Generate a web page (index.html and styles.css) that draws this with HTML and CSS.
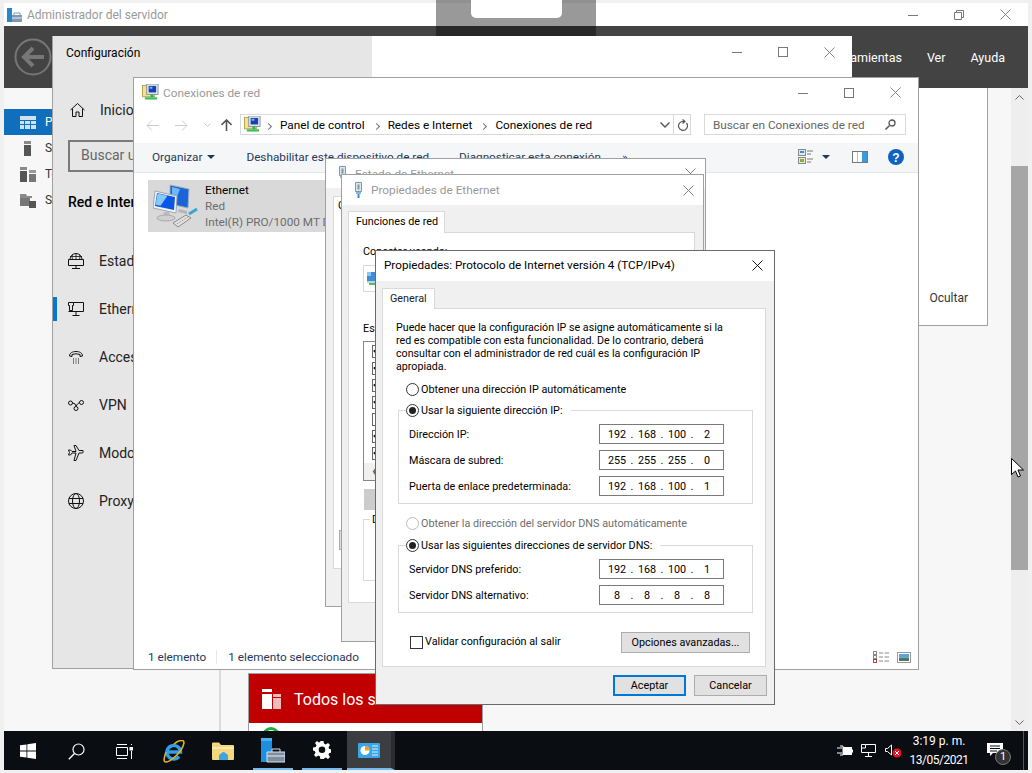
FILE: index.html
```html
<!DOCTYPE html>
<html lang="es">
<head>
    <meta charset="UTF-8">
    <title>Administrador del servidor</title>
    <link rel="stylesheet" href="styles.css">
</head>
<body>
<svg class="defs" width="0" height="0">
    <symbol id="i-close" viewBox="0 0 12 12"><path d="M.5.5l11 11M11.500.5l-11 11" fill="none" stroke="currentColor"/></symbol>
    <symbol id="i-max" viewBox="0 0 10 10"><rect x=".5" y=".5" width="9" height="9" fill="none" stroke="currentColor"/></symbol>
    <symbol id="i-min" viewBox="0 0 10 10"><path d="M0 5.500h10" stroke="currentColor"/></symbol>
    <symbol id="i-net" viewBox="0 0 18 18">
        <rect x=".5" y="1.500" width="13" height="12" fill="#f6e08a" stroke="#b8a24a"/>
        <rect x="5" y="0" width="12" height="11" fill="#e8eef5" stroke="#7f8fa0"/>
        <rect x="7" y="2" width="8" height="7" fill="#1b3fb0"/>
        <rect x="8" y="3" width="3" height="2" fill="#7fb4f0"/>
        <path d="M9 11h3v3H9z" fill="#2fae4e"/>
        <path d="M3 14h13v2.500H3z" fill="#3fc060"/>
    </symbol>
    <symbol id="i-plug" viewBox="0 0 9 16">
        <path d="M1.500.5h6v9h-6z" fill="#dbe6ee" stroke="#7f96a8"/>
        <path d="M3.500 2.500h2v5h-2z" fill="#7f96a8"/>
        <path d="M2 10h5v2H2z" fill="#8fb4d0"/>
        <path d="M3.500 12h2v4h-2z" fill="#2f8fd0"/>
    </symbol>
</svg>

<div class="screen">
    <div class="server">
        <div class="server-title">
            <svg class="server-logo" width="15" height="14" viewBox="0 0 15 14">
                <rect x="0" y="0" width="5" height="3" fill="#1f8ad0"/>
                <rect x="0" y="3" width="5" height="11" fill="#2a86c8"/>
                <path d="M5 7h10v7H5z" fill="#7d9ab0"/>
                <path d="M5 10h10" stroke="#e4edf3"/>
                <path d="M7 7V5h6v2" fill="none" stroke="#7d9ab0"/>
            </svg>
            <span class="server-name">Administrador del servidor</span>
            <div class="caption caption-server">
                <span class="cap"><svg width="10" height="10"><use href="#i-min"/></svg></span>
                <span class="cap"><svg width="10" height="10" viewBox="0 0 10 10"><path d="M.5 2.500h7v7h-7zM2.500 2.500v-2h7v7h-2" fill="none" stroke="currentColor"/></svg></span>
                <span class="cap"><svg width="11" height="11"><use href="#i-close"/></svg></span>
            </div>
        </div>
        <div class="server-menu">
            <svg class="back" width="38" height="38" viewBox="0 0 38 38">
                <circle cx="19" cy="19" r="17.500" fill="none" stroke="#777" stroke-width="2"/>
                <path d="M30 19H11M19 10l-9 9 9 9" fill="none" stroke="#777" stroke-width="4"/>
            </svg>
            <span class="menu-link">Herramientas</span>
            <span class="menu-link">Ver</span>
            <span class="menu-link">Ayuda</span>
        </div>
        <div class="server-main">
            <div class="side">
                <div class="side-item side-on">
                    <svg width="16" height="13" viewBox="0 0 16 13"><path d="M0 0h16v4H0zM0 5h4v3H0zM5 5h5v3H5zM11 5h5v3h-5zM0 9h4v4H0zM5 9h5v4H5zM11 9h5v4h-5z" fill="#cfe2f3"/></svg>
                    <span>Panel</span>
                </div>
                <div class="side-item">
                    <svg width="16" height="15" viewBox="0 0 16 15"><path d="M4 0h7v3H4z" fill="#8a8a8a"/><path d="M4 4h7v11H4z" fill="#555"/></svg>
                    <span>Servidor</span>
                </div>
                <div class="side-item">
                    <svg width="16" height="15" viewBox="0 0 16 15"><path d="M0 0h7v3H0z" fill="#8a8a8a"/><path d="M0 4h7v11H0z" fill="#555"/><path d="M9 3h7v3H9z" fill="#999"/><path d="M9 7h7v8H9z" fill="#777"/></svg>
                    <span>Todos</span>
                </div>
                <div class="side-item">
                    <svg width="16" height="15" viewBox="0 0 16 15"><path d="M0 1h6l1 2h5v2H0z" fill="#8a8a8a"/><path d="M0 5h10v8H0z" fill="#777"/><path d="M9 8h7v7H9z" fill="#555"/></svg>
                    <span>Servicios</span>
                </div>
            </div>
            <div class="content">
                <div class="welcome"><span class="hide-link">Ocultar</span></div>
                <div class="tile">
                    <div class="tile-head">
                        <svg width="19" height="20" viewBox="0 0 19 20"><path d="M0 0h10v3H0zM0 5h10v15H0z" fill="#fff"/><path d="M11 5h8v3h-8zM11 9h8v11h-8z" fill="#f0bcbc"/></svg>
                        <span class="tile-name">Todos los servidores</span>
                        <span class="tile-count">1</span>
                    </div>
                    <svg class="tile-ok" width="18" height="18" viewBox="0 0 18 18"><circle cx="9" cy="9" r="7.500" fill="none" stroke="#1fae3a" stroke-width="3"/></svg>
                </div>
            </div>
            <div class="scrollbar">
                <svg class="scroll-up" width="9" height="5" viewBox="0 0 9 5"><path d="M.5 4.500l4-4 4 4" fill="none" stroke="#666"/></svg>
                <div class="scroll-thumb"></div>
                <svg class="scroll-down" width="9" height="5" viewBox="0 0 9 5"><path d="M.5.5l4 4 4-4" fill="none" stroke="#666"/></svg>
            </div>
        </div>
    </div>

    <div class="taskbar">
        <span class="task"><svg width="16" height="16" viewBox="0 0 16 16"><path d="M0 2.300l6.500-.9v6.200H0zM7.300 1.300L16 0v7.600H7.300zM0 8.400h6.500v6.200L0 13.700zM7.300 8.400H16V16l-8.700-1.300z" fill="#fff"/></svg></span>
        <span class="task"><svg width="17" height="17" viewBox="0 0 17 17"><circle cx="10.500" cy="6.500" r="5.500" fill="none" stroke="#fff" stroke-width="1.200"/><path d="M6.500 10.500L.8 16.300" stroke="#fff" stroke-width="1.400"/></svg></span>
        <span class="task"><svg width="17" height="15" viewBox="0 0 17 15"><path d="M1 .5h10M1 14.500h10M.5 3.500h11v8H.5zM15.500 7v8M15.500 0v1" fill="none" stroke="#fff"/><rect x="13.500" y="3" width="3.500" height="3.500" fill="#fff"/></svg></span>
        <span class="task task-ie"><svg width="22" height="23" viewBox="0 0 22 23">
            <path d="M4 12h13.500a6.800 6.800 0 1 0-1.500 4.500" fill="none" stroke="#2f9fe8" stroke-width="3.400"/>
            <path d="M3 12C1 18 0 22 3 22c3.500 0 11-6 15-12 3-5 4-9 1.500-9.500C17.500.2 14 1.500 11 4" fill="none" stroke="#e8b020" stroke-width="1.600"/>
        </svg></span>
        <span class="task task-folder"><svg width="22" height="19" viewBox="0 0 22 19">
            <path d="M0 1.500q0-1 1-1h6l2 2.500h12q1 0 1 1V17q0 1-1 1H1q-1 0-1-1z" fill="#f5d77e"/>
            <path d="M0 5h22v2H0z" fill="#fbe9ad"/>
            <path d="M7 13l4-3h1l4 3v5H7z" fill="#3ba5e5"/>
        </svg></span>
        <span class="task task-on task-mgr"><svg width="24" height="25" viewBox="0 0 24 25">
            <path d="M0 0h11v3H0z" fill="#4ab0f0"/><path d="M0 3h11v21H0z" fill="#1e8ee0"/>
            <path d="M6 14h18v10H6z" fill="#7d8f9f" stroke="#d8e2ea"/><path d="M6 18h18" stroke="#e8eef2"/><path d="M11 14v-3h8v3" fill="none" stroke="#d8e2ea"/>
        </svg></span>
        <span class="task task-on task-gear"><svg width="18" height="18" viewBox="0 0 18 18">
            <path d="M7.500 0h3l.5 2.600 1.800.8L15 1.900 17 4l-1.500 2.200.8 1.800 2.700.5v3l-2.700.5-.8 1.800 1.500 2.200-2 2.100-2.200-1.500-1.800.8-.5 2.600h-3L7 15.400l-1.800-.8L3 16.100 1 14l1.500-2.200-.8-1.800L-.1 9.500v-3L2.700 6l.8-1.800L2 2 4 0l2 1.500L7 1z" fill="#fff"/>
            <circle cx="9" cy="8.800" r="3.300" fill="#0a0d12"/>
        </svg></span>
        <span class="task task-active"><svg width="22" height="15" viewBox="0 0 22 15">
            <rect width="22" height="15" rx="1" fill="#3aa6e8"/><circle cx="7" cy="7.500" r="4.500" fill="#fff"/><path d="M7 7.500V3a4.500 4.500 0 0 1 4.500 4.500z" fill="#e8a020"/><path d="M14 3h6M14 6h6M14 9h6M14 12h6" stroke="#d8f0ff"/>
        </svg></span>
        <div class="tray">
            <svg width="16" height="11" viewBox="0 0 16 11"><path d="M0 3h5M0 8h5M3 1h3v9H3" fill="none" stroke="#fff"/><rect x="6.500" y="2.500" width="8" height="7" fill="#fff" stroke="#fff"/><path d="M15 4.500h1v3h-1z" fill="#fff"/></svg>
            <svg width="16" height="13" viewBox="0 0 16 13"><path d="M.5 1.500v7h14v-8h-10M7.500 8.500v4M4 12.500h7" fill="none" stroke="#fff"/><path d="M.5.5h4v3.500h-4z" fill="#0a0d12" stroke="#fff"/></svg>
            <svg width="17" height="14" viewBox="0 0 17 14"><path d="M.5 4.500h2l4-3.500v10l-4-3.500h-2z" fill="none" stroke="#fff"/><circle cx="12" cy="9" r="4.500" fill="#e81123"/><path d="M10 7l4 4M14 7l-4 4" stroke="#fff"/></svg>
            <div class="clock"><span>3:19 p. m.</span><span class="clock-date">13/05/2021</span></div>
            <div class="notif">
                <svg width="16" height="14" viewBox="0 0 16 14"><path d="M0 0h16v10H6l-3 3v-3H0z" fill="#fff"/><path d="M3 3h10M3 5.500h10M3 8h7" stroke="#0a0d12"/></svg>
                <span class="notif-badge">1</span>
            </div>
            <span class="desk-line"></span>
        </div>
    </div>

    <div class="snap"><div class="snap-thumb"></div></div>

    <div class="win config">
        <div class="config-side">
            <div class="config-title">Configuración</div>
            <div class="config-home">
                <svg width="15" height="14" viewBox="0 0 15 14"><path d="M.5 7l7-6.500 7 6.500M2.500 5.500v8h3.500V9h3v4.500h3.500v-8" fill="none" stroke="#111"/></svg>
                <span>Inicio</span>
            </div>
            <div class="config-search">Buscar un valor de configuración</div>
            <div class="config-head">Red e Internet</div>
            <div class="config-list">
                <div class="config-item">
                    <svg width="16" height="16" viewBox="0 0 16 16"><circle cx="8" cy="6.500" r="6" fill="none" stroke="#111"/><path d="M2 3.500h12M8 .5v6M4.500 1.500q-1 2 0 5M11.500 1.500q1 2 0 5" fill="none" stroke="#111" stroke-width=".8"/><path d="M.5 6.500h15v6H.5zM8 12.500v3M4 15.500h8" fill="#e6e6e6" stroke="#111"/></svg>
                    <span>Estado de la red</span>
                </div>
                <div class="config-item item-on">
                    <svg width="16" height="14" viewBox="0 0 16 14"><path d="M4 .5h11.500v9H.5M8 9.500v4M4.500 13.500h7" fill="none" stroke="#111"/><path d="M.5.5h5v3h-1v5h-3v-5h-1z" fill="#e6e6e6" stroke="#111"/></svg>
                    <span>Ethernet</span>
                </div>
                <div class="config-item">
                    <svg width="14" height="13" viewBox="0 0 14 13"><path d="M.5 5c0-3 3-4.500 6.500-4.500S13.500 2 13.500 5l-2.500.5V3.500q-4-1.500-8 0v2z" fill="none" stroke="#111"/><path d="M4 8h1M6.500 8h1M9 8h1M4 10h1M6.500 10h1M9 10h1M4 12h1M6.500 12h1M9 12h1" stroke="#111"/></svg>
                    <span>Acceso telefónico</span>
                </div>
                <div class="config-item">
                    <svg width="16" height="11" viewBox="0 0 16 11"><circle cx="2.500" cy="3" r="2" fill="none" stroke="#111"/><circle cx="13.500" cy="2.500" r="2" fill="none" stroke="#111"/><circle cx="8" cy="8.500" r="2" fill="none" stroke="#111"/><path d="M4.500 3q3 0 3.500 3M8 6q2-3 3.500-3.500" fill="none" stroke="#111"/></svg>
                    <span>VPN</span>
                </div>
                <div class="config-item">
                    <svg width="16" height="16" viewBox="0 0 16 16"><path d="M6 .5h2l3 5h4q.5 2-.5 2.500H11l-3 7.500H6L8 8H4L2.500 10H.5l1-2.500-1-2.500h2L4 6.500h4z" fill="none" stroke="#111"/></svg>
                    <span>Modo avión</span>
                </div>
                <div class="config-item">
                    <svg width="16" height="16" viewBox="0 0 16 16"><circle cx="8" cy="8" r="7.500" fill="none" stroke="#111"/><ellipse cx="8" cy="8" rx="3.500" ry="7.500" fill="none" stroke="#111"/><path d="M1 5.500h14M1 10.500h14" stroke="#111"/></svg>
                    <span>Proxy</span>
                </div>
            </div>
        </div>
        <div class="config-main">
            <div class="caption">
                <span class="cap"><svg width="10" height="10"><use href="#i-min"/></svg></span>
                <span class="cap"><svg width="10" height="10"><use href="#i-max"/></svg></span>
                <span class="cap"><svg width="11" height="11"><use href="#i-close"/></svg></span>
            </div>
        </div>
    </div>

    <div class="win conns">
        <div class="win-title conns-title">
            <svg width="17" height="17"><use href="#i-net"/></svg>
            <span class="title-off">Conexiones de red</span>
            <div class="caption">
                <span class="cap"><svg width="10" height="10"><use href="#i-min"/></svg></span>
                <span class="cap"><svg width="10" height="10"><use href="#i-max"/></svg></span>
                <span class="cap"><svg width="11" height="11"><use href="#i-close"/></svg></span>
            </div>
        </div>
        <div class="nav">
            <svg class="nav-btn" width="13" height="11" viewBox="0 0 13 11"><path d="M13 5.500H1M6 .5l-5 5 5 5" fill="none" stroke="#ccc"/></svg>
            <svg class="nav-btn" width="13" height="11" viewBox="0 0 13 11"><path d="M0 5.500h12M7 .5l5 5-5 5" fill="none" stroke="#ccc"/></svg>
            <svg class="nav-btn nav-drop" width="7" height="4" viewBox="0 0 7 4"><path d="M.5.500l3 3 3-3" fill="none" stroke="#ccc"/></svg>
            <svg class="nav-btn nav-up" width="11" height="12" viewBox="0 0 11 12"><path d="M5.500 12V1.500M.5 6l5-5 5 5" fill="none" stroke="#555" stroke-width="1.600"/></svg>
            <div class="address">
                <svg width="17" height="17"><use href="#i-net"/></svg>
                <span class="crumb">Panel de control</span>
                <span class="crumb">Redes e Internet</span>
                <span class="crumb">Conexiones de red</span>
                <svg class="addr-drop" width="10" height="6" viewBox="0 0 10 6"><path d="M.5.5l4.500 4.500L9.500.5" fill="none" stroke="#555" stroke-width="1.400"/></svg>
                <span class="addr-refresh"><svg width="11" height="12" viewBox="0 0 11 12"><path d="M9.500 4a4.500 4.500 0 1 1-4.500-1.500H8M5.500.5l2.500 2-2.500 2" fill="none" stroke="#555" stroke-width="1.200"/></svg></span>
            </div>
            <div class="find">
                <span>Buscar en Conexiones de red</span>
                <svg width="11" height="11" viewBox="0 0 11 11"><circle cx="7" cy="4" r="3" fill="none" stroke="#555" stroke-width="1.300"/><path d="M4.500 6.500L.5 10.500" stroke="#555" stroke-width="1.500"/></svg>
            </div>
        </div>
        <div class="toolbar">
            <span class="tool tool-org">Organizar <i class="drop"></i></span>
            <span class="tool tool-dis">Deshabilitar este dispositivo de red</span>
            <span class="tool tool-diag">Diagnosticar esta conexión</span>
            <span class="tool tool-more">»</span>
            <div class="tool-icons">
                <svg width="15" height="15" viewBox="0 0 15 15"><rect x=".5" y=".5" width="7" height="6" fill="#dfe8f0" stroke="#888"/><rect x="2" y="2" width="4" height="2" fill="#3b8ed0"/><rect x=".5" y="8.500" width="7" height="6" fill="#f0e6c8" stroke="#888"/><rect x="2" y="10" width="4" height="3" fill="#7fb050"/><path d="M9 2h6M9 5h4M9 10h6M9 13h4" stroke="#777"/></svg>
                <i class="drop drop-view"></i>
                <svg class="pane-icon" width="16" height="12" viewBox="0 0 16 12"><rect x=".5" y=".5" width="15" height="11" fill="#fff" stroke="#777"/><rect x="10" y="1" width="5" height="10" fill="#3a9ae0"/><path d="M5.500 1v10" stroke="#bbb"/></svg>
                <svg class="help-icon" width="16" height="16" viewBox="0 0 16 16"><circle cx="8" cy="8" r="8" fill="#0f62c0"/><text x="8" y="12.500" font-size="12" font-weight="700" text-anchor="middle" fill="#fff" font-family="Liberation Sans, sans-serif">?</text></svg>
            </div>
        </div>
        <div class="conn-list">
            <div class="conn">
                <svg width="46" height="46" viewBox="0 0 46 46">
                    <path d="M17 2l19 4-1 19-18-4z" fill="#1a63d8" stroke="#9fb0bf"/>
                    <path d="M19 4l8 2-5 13-3-1z" fill="#6fb8f5"/>
                    <path d="M26 26l8 2v3l-9-2z" fill="#b5b5b5"/>
                    <path d="M2 8l22 5-1 17-23-5z" fill="#f2f4f6" stroke="#9fa8b0"/>
                    <path d="M4 10l18 4-1 13-19-4z" fill="#0b56e6"/>
                    <path d="M4.500 10.500l10 2.200-7 10-5-1z" fill="#86c8f8"/>
                    <path d="M11 29h5l1 4h-7z" fill="#bbb"/>
                    <ellipse cx="13" cy="35" rx="9" ry="3" fill="#d0d0d0" stroke="#aaa"/>
                    <path d="M20 40l13-8 5 3-13 9z" fill="#e2e2e2" stroke="#8a8a8a"/>
                    <path d="M24 41l11-7" stroke="#8a8a8a" stroke-dasharray="1 1"/>
                    <path d="M36 31l8-5" stroke="#36a8d8" stroke-width="3"/>
                </svg>
                <div class="conn-text">
                    <span class="conn-name">Ethernet</span>
                    <span>Red</span>
                    <span>Intel(R) PRO/1000 MT Desktop Adapter</span>
                </div>
            </div>
        </div>
        <div class="statusbar">
            <span class="st-count">1 elemento</span>
            <span class="st-sel">1 elemento seleccionado</span>
            <div class="st-icons">
                <svg width="16" height="12" viewBox="0 0 16 12"><rect x=".5" y=".5" width="3" height="3" fill="none" stroke="#888"/><rect x=".5" y="4.500" width="3" height="3" fill="none" stroke="#888"/><rect x=".5" y="8.500" width="3" height="3" fill="none" stroke="#a44"/><path d="M6 2h4M11.500 2H16M6 6h4M11.500 6H16M6 10h4M11.500 10H16" stroke="#888"/></svg>
                <svg width="14" height="11" viewBox="0 0 14 11"><rect x=".5" y=".5" width="13" height="10" fill="#fff" stroke="#999"/><rect x="2" y="2" width="10" height="3.500" fill="#5ba6e0"/><rect x="2" y="5.500" width="10" height="3.500" fill="#4d7a6a"/></svg>
            </div>
        </div>
    </div>

    <div class="win estado">
        <div class="win-title dlg-title">
            <svg width="9" height="16"><use href="#i-plug"/></svg>
            <span class="title-off">Estado de Ethernet</span>
            <span class="dlg-x"><svg width="11" height="11"><use href="#i-close"/></svg></span>
        </div>
        <div class="estado-body">
            <div class="estado-panel">
                <span class="estado-frag">Conexión</span>
                <span class="estado-btn"></span>
            </div>
        </div>
    </div>

    <div class="win eth">
        <div class="win-title dlg-title eth-title">
            <svg width="9" height="16"><use href="#i-plug"/></svg>
            <span class="title-off">Propiedades de Ethernet</span>
            <span class="dlg-x"><svg width="11" height="11"><use href="#i-close"/></svg></span>
        </div>
        <div class="dlg-body eth-body">
            <div class="tab eth-tab">Funciones de red</div>
            <div class="panel eth-panel">
                <div class="eth-label">Conectar usando:</div>
                <div class="eth-adapter">
                    <svg width="9" height="14" viewBox="0 0 9 14"><path d="M0 1h9v9H0z" fill="#3b8fd8"/><path d="M0 1h4v4H0z" fill="#8cc6f2"/><path d="M0 10h9v2H0z" fill="#c8d0d6"/><path d="M2 12h7v2H2z" fill="#4cc060"/></svg>
                </div>
                <div class="eth-label eth-label2">Esta conexión usa los siguientes elementos:</div>
                <div class="eth-items">
                    <span class="eth-check on"></span>
                    <span class="eth-check on"></span>
                    <span class="eth-check on"></span>
                    <span class="eth-check on"></span>
                    <span class="eth-check"></span>
                    <span class="eth-check on"></span>
                    <span class="eth-check on"></span>
                    <span class="eth-hscroll">‹</span>
                </div>
                <div class="eth-btn"></div>
                <fieldset class="eth-desc"><legend>Descripción</legend></fieldset>
            </div>
        </div>
    </div>

    <div class="win ipv4">
        <div class="ipv4-title">
            <span>Propiedades: Protocolo de Internet versión 4 (TCP/IPv4)</span>
            <svg width="11" height="11"><use href="#i-close"/></svg>
        </div>
        <div class="dlg-body ipv4-body">
            <div class="tab ipv4-tab">General</div>
            <div class="panel ipv4-panel">
                <p class="intro">Puede hacer que la configuración IP se asigne automáticamente si la<br>red es compatible con esta funcionalidad. De lo contrario, deberá<br>consultar con el administrador de red cuál es la configuración IP<br>apropiada.</p>
                <div class="radio-row"><span class="radio"></span>Obtener una dirección IP automáticamente</div>
                <fieldset class="group">
                    <legend class="radio-row"><span class="radio on"></span>Usar la siguiente dirección IP:</legend>
                    <div class="ip-row"><span>Dirección IP:</span><div class="ip"><b>192</b><i>.</i><b>168</b><i>.</i><b>100</b><i>.</i><b>2</b></div></div>
                    <div class="ip-row"><span>Máscara de subred:</span><div class="ip"><b>255</b><i>.</i><b>255</b><i>.</i><b>255</b><i>.</i><b>0</b></div></div>
                    <div class="ip-row"><span>Puerta de enlace predeterminada:</span><div class="ip"><b>192</b><i>.</i><b>168</b><i>.</i><b>100</b><i>.</i><b>1</b></div></div>
                </fieldset>
                <div class="radio-row radio-off"><span class="radio"></span>Obtener la dirección del servidor DNS automáticamente</div>
                <fieldset class="group group-dns">
                    <legend class="radio-row"><span class="radio on"></span>Usar las siguientes direcciones de servidor DNS:</legend>
                    <div class="ip-row"><span>Servidor DNS preferido:</span><div class="ip"><b>192</b><i>.</i><b>168</b><i>.</i><b>100</b><i>.</i><b>1</b></div></div>
                    <div class="ip-row"><span>Servidor DNS alternativo:</span><div class="ip"><b>8</b><i>.</i><b>8</b><i>.</i><b>8</b><i>.</i><b>8</b></div></div>
                </fieldset>
                <div class="validate">
                    <span class="check"></span>
                    <span class="validate-text">Validar configuración al salir</span>
                    <span class="btn btn-adv">Opciones avanzadas...</span>
                </div>
            </div>
            <div class="dlg-foot">
                <span class="btn btn-ok">Aceptar</span>
                <span class="btn">Cancelar</span>
            </div>
        </div>
    </div>

    <svg class="cursor" width="13" height="20" viewBox="0 0 13 20"><path d="M.5.500v16l4-3.500 2.500 6 2.500-1-2.500-6h5.500z" fill="#fff" stroke="#000"/></svg>
</div>
</body>
</html>
```

FILE: styles.css
```css
* {
    box-sizing: border-box;
}

html, body {
    margin: 0;
    height: 100%;
}

body {
    font-family: Roboto, "Noto Sans", sans-serif;
    font-size: 11.75px;
    color: #000;
    overflow: hidden;
}

.defs {
    position: absolute;
}

svg {
    display: block;
    flex: none;
}

.screen {
    position: relative;
    width: 1032px;
    height: 773px;
    padding: 3px 4px;
    background: #f0f0f0;
    display: flex;
    flex-direction: column;
    overflow: hidden;
}

/* administrador del servidor */
.server {
    height: 728px;
    display: flex;
    flex-direction: column;
}

.server-title {
    height: 23px;
    background: #fff;
    display: flex;
    align-items: center;
    padding-left: 3px;
    flex: none;
}

.server-name {
    margin-left: 5px;
    font-size: 12px;
    color: #999;
}

.caption {
    display: flex;
    justify-content: flex-end;
    margin-left: auto;
    color: #777;
}

.cap {
    width: 46px;
    height: 32px;
    display: flex;
    align-items: center;
    justify-content: center;
}

.caption-server .cap {
    height: 23px;
}

.server-menu {
    height: 62px;
    background: #434343;
    flex: none;
    display: flex;
    align-items: center;
    padding-left: 10px;
    color: #fff;
    font-size: 12.5px;
}

.menu-link:nth-child(2) {
    margin-left: auto;
}

.menu-link {
    margin-right: 25px;
}

.menu-link:last-child {
    margin-right: 23px;
}

.server-main {
    flex: 1;
    display: flex;
    background: #f7f7f7;
    min-height: 0;
}

.side {
    width: 217px;
    flex: none;
    border-right: 2px solid #dcdcdc;
    padding-top: 21px;
    font-size: 12px;
}

.side-item {
    height: 26px;
    display: flex;
    align-items: center;
    gap: 9px;
    padding-left: 16px;
    color: #333;
}

.side-on {
    background: #0f6fbc;
    color: #fff;
}

.content {
    flex: 1;
    padding-right: 23px;
    overflow: hidden;
}

.welcome {
    height: 238px;
    background: #fff;
    border-right: 1px solid #a0a0a0;
    border-bottom: 1px solid #a0a0a0;
    display: flex;
    align-items: flex-end;
    justify-content: flex-end;
    padding: 0 19px 20px 0;
    font-size: 12px;
    color: #333;
}

.tile {
    width: 235px;
    margin: 347px 0 0 27px;
    height: 80px;
    background: #fff;
    border: 1px solid #a0a0a0;
}

.tile-head {
    height: 49px;
    background: #c00000;
    color: #fff;
    display: flex;
    align-items: center;
    padding-left: 13px;
}

.tile-name {
    margin-left: 13px;
    padding-top: 2px;
    font-size: 16px;
}

.tile-count {
    margin-left: auto;
    margin-right: 15px;
    font-size: 15px;
}

.tile-ok {
    margin: 4px 0 0 13px;
}

.scrollbar {
    width: 17px;
    flex: none;
    background: #eee;
    display: flex;
    flex-direction: column;
    align-items: center;
    padding-top: 7px;
}

.scroll-thumb {
    width: 17px;
    height: 404px;
    margin-top: 66px;
    background: #a6a6a6;
}

.scroll-down {
    margin-top: auto;
    margin-bottom: 6px;
}

/* barra de tareas */
.taskbar {
    height: 39px;
    background: #0a0d12;
    flex: none;
    display: flex;
    color: #fff;
}

.task {
    width: 48px;
    display: flex;
    align-items: center;
    justify-content: center;
    padding-top: 1px;
}

.task-ie {
    width: 52px;
}

.task-folder {
    width: 46px;
}

.task-on {
    width: 40px;
    border-bottom: 2px solid #76b9ed;
}

.task-mgr {
    margin-left: 7px;
}

.task-gear {
    margin-left: 9px;
}

.task-active {
    width: 48px;
    margin-left: 5px;
    background: #3b3d41;
    border-right: 4px solid #2a2c30;
    border-bottom: 2px solid #76b9ed;
}

.tray {
    margin-left: auto;
    display: flex;
    align-items: center;
}

.tray > svg {
    margin-right: 8px;
}

.clock {
    width: 72px;
    margin-left: -7px;
    margin-right: 12px;
    display: flex;
    flex-direction: column;
    align-items: center;
    line-height: 19px;
    font-size: 12px;
}

.clock-date {
    letter-spacing: -.5px;
}

.notif {
    position: relative;
    width: 36px;
    height: 24px;
    padding-top: 4px;
}

.notif-badge {
    position: absolute;
    left: 8px;
    top: 10px;
    width: 16px;
    height: 16px;
    border-radius: 50%;
    background: #333;
    border: 1px solid #777;
    font-size: 11px;
    line-height: 14px;
    text-align: center;
}

.desk-line {
    width: 1px;
    height: 100%;
    margin-right: 4px;
    background: #555;
}

/* barra gris de arriba */
.snap {
    position: absolute;
    left: 436px;
    top: 0;
    width: 160px;
    height: 38px;
    background: rgba(0, 0, 0, .4);
    border-radius: 0 0 3px 3px;
}

.snap-thumb {
    width: 91px;
    height: 18px;
    margin-left: 35px;
    background: #fff;
    border-radius: 0 0 5px 5px;
}

/* ventanas */
.win {
    position: absolute;
    background: #fff;
    border: 1px solid #a0a0a0;
    display: flex;
    flex-direction: column;
}

.win-title {
    height: 32px;
    flex: none;
    display: flex;
    align-items: center;
    padding-left: 8px;
}

.conns-title {
    height: 29px;
}

.dlg-title {
    height: 29px;
    padding-left: 12px;
}

.dlg-title .title-off {
    margin-left: 8px;
}

.eth-title {
    height: 30px;
}

.title-off {
    margin-left: 4px;
    font-size: 11.8px;
    color: #999;
}

.config {
    left: 52px;
    top: 36px;
    width: 800px;
    height: 633px;
    flex-direction: row;
    border-top: 0;
    border-right: 0;
}

.config-side {
    width: 319px;
    background: #e6e6e6;
    padding-left: 15px;
    flex: none;
}

.config-title {
    line-height: 34px;
    margin-left: -2px;
    font-size: 12px;
}

.config-home,
.config-item {
    display: flex;
    align-items: center;
    font-size: 14px;
    color: #222;
}

.config-home {
    height: 24px;
    margin-top: 28px;
    gap: 15px;
    padding-left: 2px;
}

.config-search {
    width: 280px;
    height: 32px;
    margin-top: 18px;
    border: 2px solid #7a7a7a;
    padding-left: 11px;
    line-height: 26px;
    font-size: 14px;
    color: #666;
    white-space: nowrap;
    overflow: hidden;
}

.config-head {
    margin-top: 18px;
    font-size: 14px;
    font-weight: 500;
    line-height: 24px;
}

.config-list {
    margin-top: 23px;
    margin-left: -15px;
}

.config-item {
    position: relative;
    height: 48px;
    padding-left: 15px;
}

.config-item svg {
    margin-right: 15px;
    width: 16px;
}

.item-on::before {
    content: "";
    position: absolute;
    left: 0;
    top: 12px;
    width: 4px;
    height: 24px;
    background: #0078d7;
}

.config-main {
    flex: 1;
}

.conns {
    left: 133px;
    top: 77px;
    width: 786px;
    height: 593px;
}

.nav {
    height: 36px;
    flex: none;
    display: flex;
    align-items: flex-start;
    padding: 7px 12px 0 12px;
}

.nav-btn {
    margin-top: 6px;
    margin-right: 16px;
}

.nav-drop {
    margin: 9px 10px 0 0;
}

.nav-up {
    margin: 5px 8px 0 0;
}

.address {
    width: 451px;
    height: 21px;
    border: 1px solid #d9d9d9;
    display: flex;
    align-items: center;
    padding-left: 3px;
    white-space: nowrap;
}

.crumb {
    margin-left: 23px;
    position: relative;
}

.crumb:first-of-type {
    margin-left: 19px;
}

.crumb::before {
    content: "";
    position: absolute;
    left: -14px;
    top: 6px;
    width: 4px;
    height: 4px;
    border-top: 1px solid #777;
    border-right: 1px solid #777;
    transform: rotate(45deg);
}

.addr-drop {
    margin-left: auto;
    margin-right: 3px;
}

.addr-refresh {
    width: 17px;
    height: 19px;
    border-left: 1px solid #d9d9d9;
    display: flex;
    align-items: center;
    justify-content: center;
}

.find {
    width: 202px;
    height: 21px;
    margin-left: 13px;
    border: 1px solid #d9d9d9;
    display: flex;
    align-items: center;
    justify-content: space-between;
    padding: 0 9px 0 8px;
    color: #666;
    white-space: nowrap;
}

.toolbar {
    height: 30px;
    flex: none;
    background: #f5f6f7;
    border-bottom: 1px solid #e5e5e5;
    display: flex;
    align-items: center;
    padding-bottom: 2px;
    color: #1e395b;
    white-space: nowrap;
}

.tool-org {
    margin-left: 18px;
}

.tool-dis {
    margin-left: 31px;
}

.tool-diag {
    margin-left: 30px;
}

.tool-more {
    margin-left: 21px;
}

.drop {
    display: inline-block;
    border-left: 4px solid transparent;
    border-right: 4px solid transparent;
    border-top: 4px solid #1e395b;
    margin-left: 2px;
    vertical-align: 2px;
}

.tool-icons {
    margin-left: auto;
    display: flex;
    align-items: center;
    padding-right: 14px;
}

.drop-view {
    margin-left: 9px;
}

.pane-icon {
    margin-left: 22px;
}

.help-icon {
    margin-left: 20px;
}

.conn-list {
    flex: 1;
    padding: 7px 0 0 14px;
}

.conn {
    width: 430px;
    height: 52px;
    background: #d9d9d9;
    display: flex;
    align-items: center;
    padding-left: 5px;
    gap: 6px;
}

.conn-text {
    display: flex;
    flex-direction: column;
    line-height: 16px;
    color: #6d6d6d;
    white-space: nowrap;
}

.conn-name {
    color: #000;
}

.statusbar {
    height: 22px;
    flex: none;
    display: flex;
    align-items: center;
    padding: 0 7px 2px 14px;
    color: #1e395b;
}

.st-count {
    padding-right: 10px;
    border-right: 1px solid #e8e8e8;
}

.st-sel {
    margin-left: 11px;
}

.st-icons {
    margin-left: auto;
    display: flex;
    gap: 8px;
    align-items: center;
}

.estado {
    left: 325px;
    top: 158px;
    width: 381px;
    height: 449px;
}

.dlg-x {
    margin-left: auto;
    margin-right: 9px;
    color: #777;
}

.estado-body {
    flex: 1;
    background: #f0f0f0;
    padding: 8px 7px 0;
    font-size: 10.8px;
}

.estado-panel {
    width: 100%;
    height: 373px;
    background: #fff;
    border: 1px solid #d9d9d9;
    padding: 2px 0 0 4px;
    display: flex;
    flex-direction: column;
}

.estado-btn {
    width: 60px;
    height: 20px;
    margin-top: 318px;
    margin-left: 1px;
    background: #e1e1e1;
    border: 1px solid #adadad;
}

.eth {
    left: 341px;
    top: 174px;
    width: 363px;
    height: 468px;
}

.dlg-body {
    flex: 1;
    background: #f0f0f0;
    font-size: 10.8px;
}

.tab {
    background: #fff;
    border: 1px solid #d9d9d9;
    border-bottom: 0;
    position: relative;
    z-index: 1;
    white-space: nowrap;
}

.panel {
    background: #fff;
    border: 1px solid #d9d9d9;
}

.eth-body {
    padding: 6px 8px 0 6px;
}

.eth-tab {
    width: 97px;
    height: 22px;
    line-height: 20px;
    padding-left: 7px;
    margin-bottom: -1px;
}

.eth-panel {
    height: 371px;
    padding-left: 14px;
    padding-right: 14px;
}

.eth-label {
    margin-top: 11px;
    line-height: 16px;
}

.eth-adapter {
    height: 27px;
    margin-top: 5px;
    border: 1px solid #d9d9d9;
    padding: 5px 0 0 3px;
}

.eth-label2 {
    margin-top: 29px;
}

.eth-items {
    height: 140px;
    margin-top: 4px;
    border: 1px solid #828790;
    padding: 3px 0 0 8px;
    display: flex;
    flex-direction: column;
    gap: 4px;
}

.eth-check {
    display: block;
    width: 13px;
    height: 13px;
    border: 1px solid #666;
    background: #fff;
    position: relative;
    flex: none;
}

.eth-check.on::after {
    content: "";
    position: absolute;
    left: 1px;
    top: 1px;
    width: 7px;
    height: 4px;
    border-left: 2px solid #111;
    border-bottom: 2px solid #111;
    transform: rotate(-45deg);
}

.eth-hscroll {
    margin-left: -8px;
    padding-left: 8px;
    margin-top: -1px;
    height: 18px;
    line-height: 16px;
    background: #f0f0f0;
    font-size: 16px;
    font-weight: 700;
    color: #555;
}

.eth-btn {
    width: 100px;
    height: 21px;
    margin-top: 8px;
    margin-left: 1px;
    background: #ccc;
}

.eth-desc {
    height: 68px;
    margin: 3px 0 0;
    padding: 0;
    border: 1px solid #d9d9d9;
}

.eth-desc legend {
    margin-left: 6px;
    padding: 0 2px;
}

/* dialogo ipv4 */
.ipv4 {
    left: 375px;
    top: 250px;
    width: 400px;
    height: 455px;
    border-color: #6a6a6a;
}

.ipv4-title {
    height: 30px;
    flex: none;
    display: flex;
    align-items: center;
    justify-content: space-between;
    padding: 0 11px 2px 8px;
    font-size: 11.7px;
}

.ipv4-body {
    padding: 7px 8px 0 6px;
}

.ipv4-tab {
    width: 53px;
    height: 21px;
    padding-left: 7px;
    line-height: 19px;
    margin-bottom: -1px;
    color: #222;
}

.ipv4-panel {
    height: 359px;
    padding: 12px 12px 0 14px;
}

.intro {
    margin: 0 0 0 -1px;
    line-height: 13px;
    font-size: 10.7px;
}

.radio-row {
    display: flex;
    align-items: center;
    height: 16px;
    padding-left: 9px;
    gap: 2px;
}

.intro + .radio-row {
    margin-top: 8px;
}

.radio {
    width: 13px;
    height: 13px;
    border: 1px solid #333;
    border-radius: 50%;
    background: #fff;
    position: relative;
    flex: none;
}

.radio.on::after {
    content: "";
    position: absolute;
    left: 2px;
    top: 2px;
    width: 7px;
    height: 7px;
    border-radius: 50%;
    background: #222;
}

.radio-off {
    color: #6d6d6d;
    margin-top: 11px;
}

.radio-off .radio {
    border-color: #bbb;
}

.group {
    width: 355px;
    height: 102px;
    margin: 5px 0 0 1px;
    padding: 6px 0 0 10px;
    border: 1px solid #d9d9d9;
}

.group legend {
    margin-left: -3px;
    padding: 0 8px 0 0;
    background: #fff;
}

.group-dns {
    height: 76px;
    margin-top: 6px;
}

.ip-row {
    display: flex;
    align-items: center;
    justify-content: space-between;
    height: 20px;
    margin-bottom: 6px;
    padding-right: 28px;
    white-space: nowrap;
}

.ip {
    width: 125px;
    height: 20px;
    border: 1px solid #7a7a7a;
    display: grid;
    grid-template-columns: 22px 8px 22px 8px 22px 8px 22px;
    align-items: center;
    padding-left: 6px;
    background: #fff;
}

.ip b, .ip i {
    font-weight: 400;
    font-style: normal;
    text-align: center;
}

.validate {
    display: flex;
    align-items: center;
    margin: 19px 0 0 13px;
}

.check {
    width: 13px;
    height: 13px;
    border: 1px solid #333;
    background: #fff;
}

.validate-text {
    margin: -2px 0 0 2px;
}

.btn {
    width: 73px;
    height: 21px;
    background: #e1e1e1;
    border: 1px solid #adadad;
    display: flex;
    align-items: center;
    justify-content: center;
}

.btn-adv {
    width: 129px;
    margin-left: auto;
    margin-right: 3px;
}

.dlg-foot {
    display: flex;
    justify-content: flex-end;
    gap: 8px;
    padding-top: 8px;
    margin-right: -1px;
}

.btn-ok {
    border: 2px solid #0078d7;
}

.cursor {
    position: absolute;
    left: 1011px;
    top: 458px;
}
```
